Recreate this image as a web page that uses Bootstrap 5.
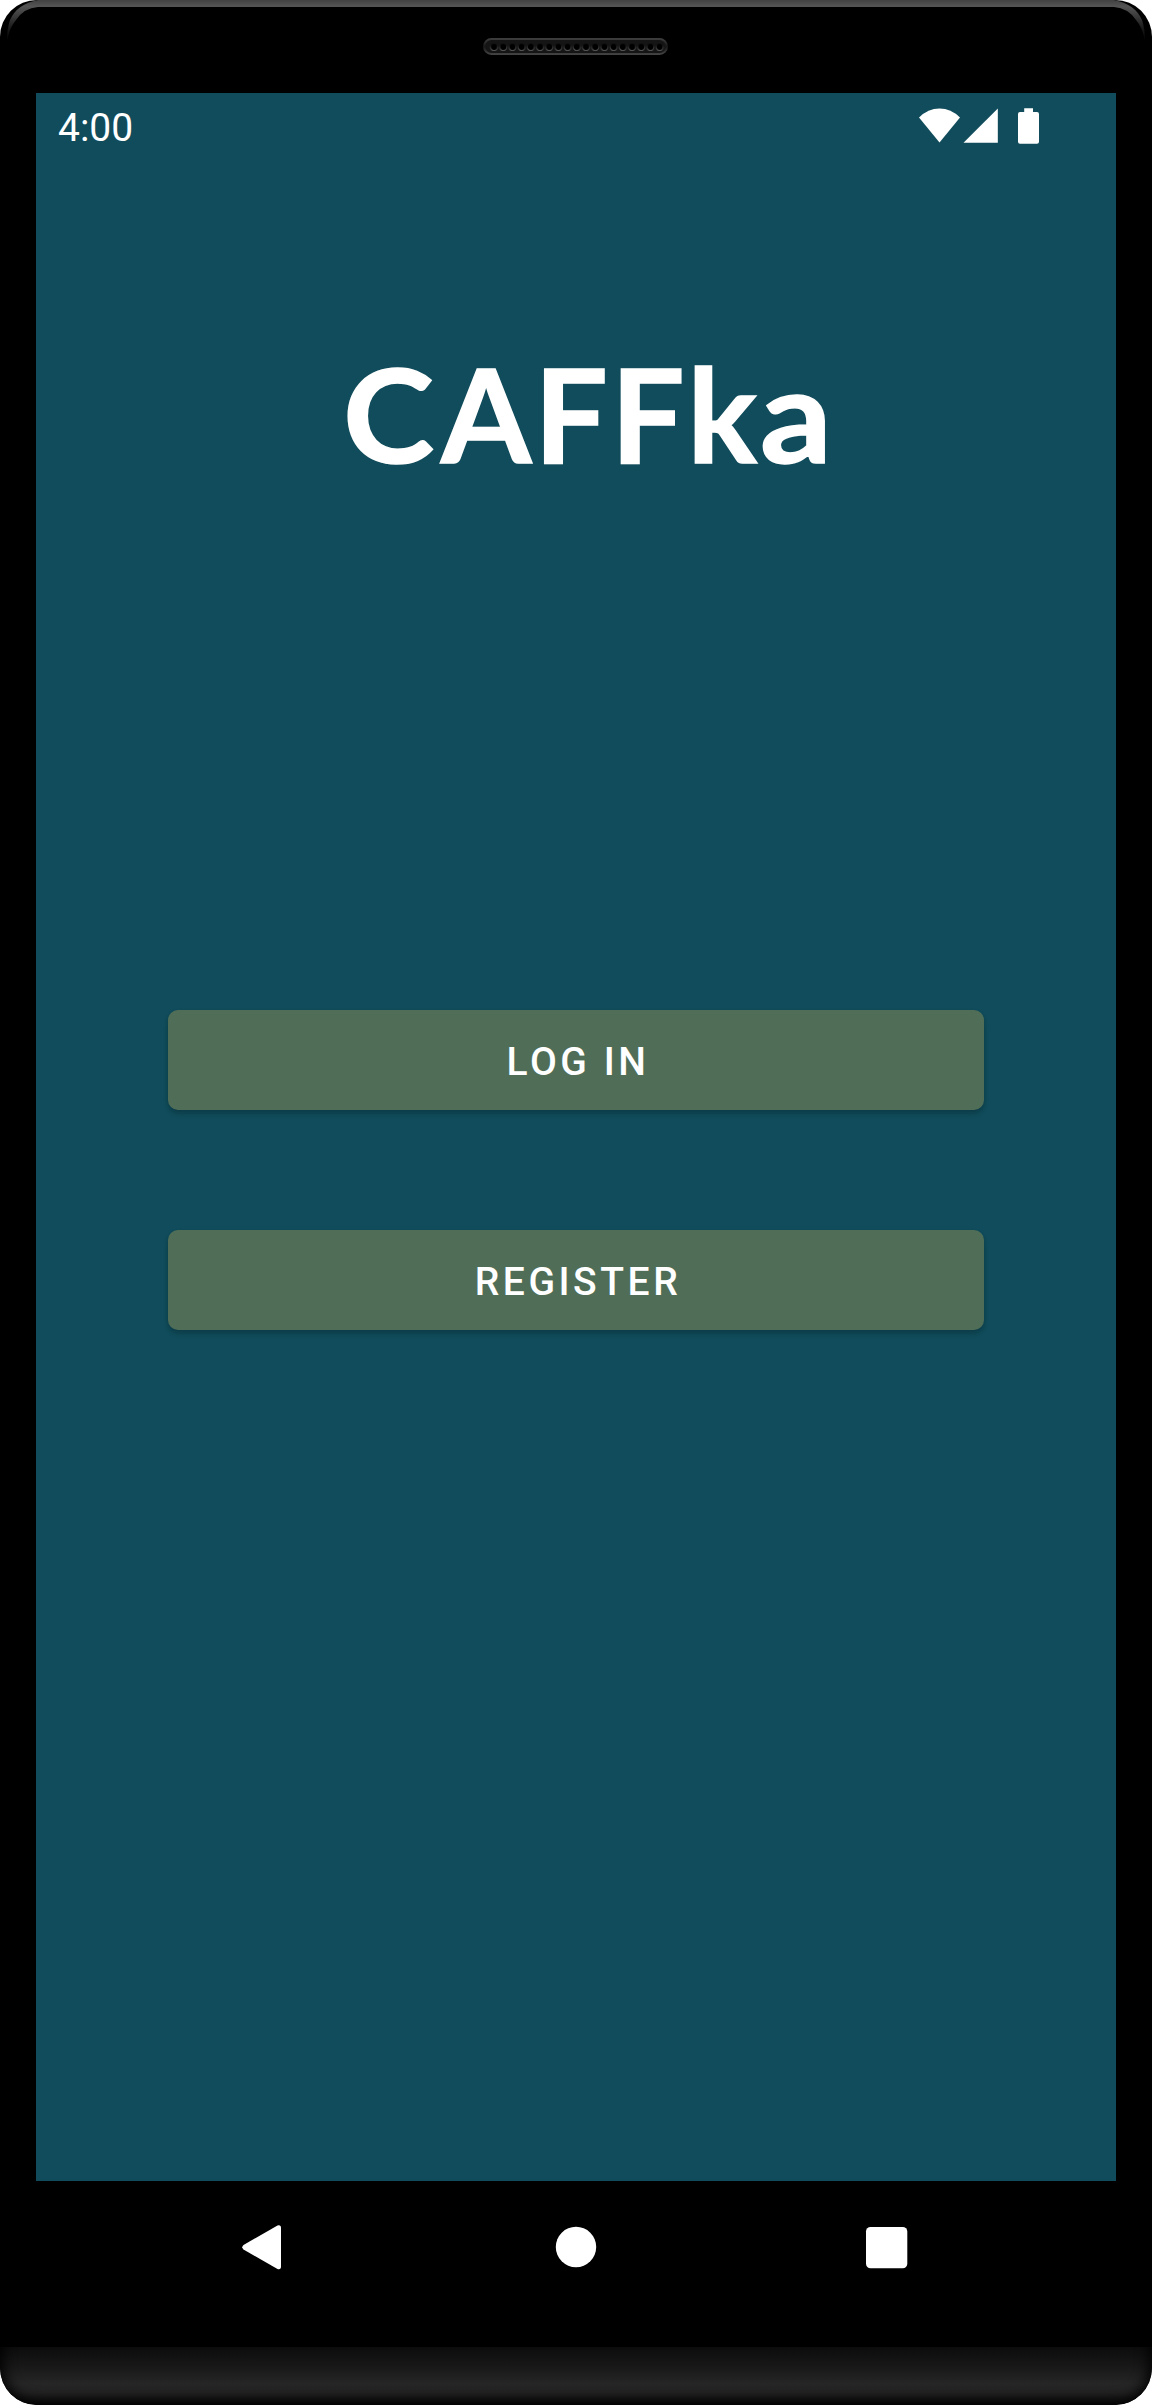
<!DOCTYPE html>
<html lang="en">
<head>
<meta charset="utf-8">
<meta name="viewport" content="width=device-width, initial-scale=1">
<title>CAFFka</title>
<link href="https://cdn.jsdelivr.net/npm/bootstrap@5.3.0/dist/css/bootstrap.min.css" rel="stylesheet">
<style>
  body { background: #fff; }
  .phone { width: 1152px; height: 2405px; border-radius: 37px; background: #000; }
  .bezel-top { height: 93px; padding-top: 38px; }
  .bezel-shine { position: absolute; top: 0; left: 0; }
  .speaker { position: relative; width: 185px; height: 17px; margin-left: 483px; }
  .screen { width: 1080px; height: 2088px; background: #104c5b; font-family: Roboto, "Liberation Sans", sans-serif; }
  .status-bar { height: 66px; padding-left: 22px; padding-right: 76px; }
  .clock { font-size: 39px; line-height: 70px; }
  .app-title { font-family: Lato, "Open Sans", sans-serif; font-weight: 700; font-size: 130px; line-height: 160px; margin: 174px 0 0 307px; letter-spacing: 3px; -webkit-text-stroke: 1.5px #fff; }
  .app-title span { display: inline-block; transform-origin: 0 50%; }
  .app-title .cap-c { margin-right: 9px; transform: scaleX(1.06); }
  .app-title .low-a { transform: scaleX(1.09); }
  .actions { margin-top: 517px; gap: 120px; padding: 0 132px; }
  .btn-app { height: 100px; border: 0; border-radius: 10px; padding: 9px 10px 6px 14px; background: #506e57; color: #fff; font-size: 39px; font-weight: 500; letter-spacing: 3.55px; line-height: 46px; box-shadow: 0 4px 5px rgba(0,0,0,.17), 0 1px 4px rgba(0,0,0,.05); }
  .btn-app:hover { background: #5a7961; color: #fff; }
  .nav-keys { height: 132px; width: 1080px; }
  .chin { position: relative; overflow: hidden; height: 58px; margin-top: 34px; border-radius: 0 0 37px 37px; background: linear-gradient(#0c0c0c 0, #171717 18px, #262626 37px, #222 46px, #161616 53px, #0a0a0a 58px); }
  .chin::before { content: ""; position: absolute; inset: -60px 0 0 0; border-radius: 0 0 37px 37px; box-shadow: inset 0 0 14px 3px #000; clip-path: inset(0); }
</style>
</head>
<body>
<main class="phone position-relative overflow-hidden d-flex flex-column align-items-center">
  <div class="bezel-top w-100 flex-shrink-0">
    <svg class="bezel-shine" width="1152" height="50" viewBox="0 0 1152 50" aria-hidden="true">
      <defs>
        <linearGradient id="shine" x1="0" y1="0" x2="0" y2="42" gradientUnits="userSpaceOnUse">
          <stop offset="0" stop-color="#414141"/><stop offset=".15" stop-color="#545454"/><stop offset=".3" stop-color="#444"/><stop offset=".65" stop-color="#1c1c1c"/><stop offset="1" stop-color="#000"/>
        </linearGradient>
      </defs>
      <path fill="url(#shine)" d="M38 0H1114V7H38z"/>
      <path fill="url(#shine)" d="M38 0Q17 4 10 20Q7 28 7 42Q9 28 16 20Q24 8 38 7zM1114 0Q1135 4 1142 20Q1145 28 1145 42Q1143 28 1136 20Q1128 8 1114 7z"/>
    </svg>
    <svg class="speaker d-block" viewBox="0 0 185 17" aria-hidden="true">
      <defs>
        <linearGradient id="rim" x1="0" y1="0" x2="0" y2="1"><stop offset="0" stop-color="#3c3c3c"/><stop offset=".5" stop-color="#181818"/><stop offset="1" stop-color="#424242"/></linearGradient>
        <linearGradient id="edge" x1="0" y1="0" x2="0" y2="1"><stop offset=".2" stop-color="#111"/><stop offset="1" stop-color="#525252"/></linearGradient>
        <pattern id="holes" x="6.4" y="4" width="9.2" height="10" patternUnits="userSpaceOnUse"><circle cx="4.6" cy="5" r="3.5" fill="#000" stroke="url(#edge)" stroke-width="1.2"/></pattern>
      </defs>
      <rect x="1" y="1" width="183" height="15" rx="7.5" fill="#151515" stroke="url(#rim)" stroke-width="2"/>
      <rect x="6.4" y="4" width="174.8" height="10" fill="url(#holes)"/>
    </svg>
  </div>

  <section class="screen flex-shrink-0 text-white">
    <header class="status-bar d-flex justify-content-between">
      <span class="clock">4:00</span>
      <svg width="122" height="66" viewBox="0 0 122 66" fill="#fff" aria-hidden="true">
        <path d="M1 24.500Q10 15.500 21.500 15.500T42 24.500L21.500 49.500z"/>
        <path d="M79.800 15.500V49.700H45.500z"/>
        <path d="M106.200 15.200H115V19h4q2 0 2 2v27.700q0 2-2 2h-17q-2 0-2-2V21q0-2 2-2h4.200z"/>
      </svg>
    </header>
    <h1 class="app-title"><span class="cap-c">C</span><span>A</span><span>F</span><span>F</span><span>k</span><span class="low-a">a</span></h1>
    <div class="actions d-flex flex-column">
      <button type="button" class="btn btn-app w-100">LOG IN</button>
      <button type="button" class="btn btn-app w-100">REGISTER</button>
    </div>
  </section>

  <nav class="nav-keys flex-shrink-0" aria-label="System navigation">
    <svg width="1080" height="132" viewBox="0 0 1080 132" fill="#fff" aria-hidden="true">
      <path d="M207.500 64L241.500 44.500Q245 43.500 245 47V85.500Q245 89 241.500 88L207.500 68.500Q205 66.300 207.500 64z"/>
      <circle cx="540" cy="66" r="20.2"/>
      <rect x="830" y="46" width="41.300" height="41.300" rx="4.500"/>
    </svg>
  </nav>
  <div class="chin w-100 flex-shrink-0"></div>
</main>
<script src="https://cdn.jsdelivr.net/npm/bootstrap@5.3.0/dist/js/bootstrap.bundle.min.js"></script>
</body>
</html>
